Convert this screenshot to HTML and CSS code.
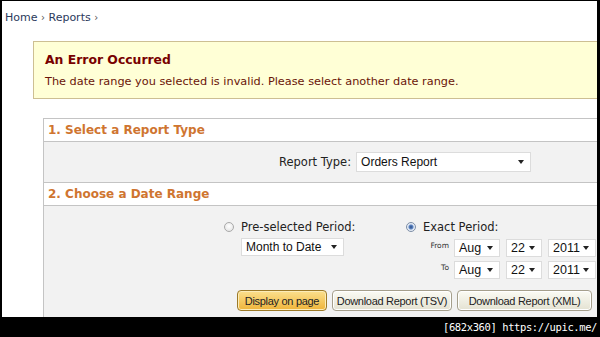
FILE: index.html
```html
<!DOCTYPE html>
<html lang="en">
<head>
  <meta charset="UTF-8">
  <meta name="viewport" content="width=device-width, initial-scale=1.0">
  <title>Reports</title>
  <link rel="stylesheet" href="styles.css">
</head>
<body>
  <div class="screen">
    <div class="crumbs">Home <span class="sep">&rsaquo;</span> Reports <span class="sep">&rsaquo;</span></div>

    <div class="error">
      <h2>An Error Occurred</h2>
      <p>The date range you selected is invalid. Please select another date range.</p>
    </div>

    <div class="panel">
      <div class="section-head">1. Select a Report Type</div>
      <div class="section-body type-row">
        <span class="label">Report Type:</span>
        <div class="select report-select"><span>Orders Report</span><i class="arrow"></i></div>
      </div>

      <div class="section-head">2. Choose a Date Range</div>
      <div class="section-body range-body">
        <div class="range-cols">
          <div class="col preset">
            <div class="radio-line"><span class="radio"></span><span class="radio-label">Pre-selected Period:</span></div>
            <div class="select month-select"><span>Month to Date</span><i class="arrow"></i></div>
          </div>
          <div class="col exact">
            <div class="radio-line"><span class="radio checked"></span><span class="radio-label">Exact Period:</span></div>
            <div class="date-row first">
              <span class="small">From</span>
              <div class="select m"><span>Aug</span><i class="arrow"></i></div>
              <div class="select d"><span>22</span><i class="arrow"></i></div>
              <div class="select y"><span>2011</span><i class="arrow"></i></div>
            </div>
            <div class="date-row">
              <span class="small">To</span>
              <div class="select m"><span>Aug</span><i class="arrow"></i></div>
              <div class="select d"><span>22</span><i class="arrow"></i></div>
              <div class="select y"><span>2011</span><i class="arrow"></i></div>
            </div>
          </div>
        </div>
        <div class="buttons">
          <button class="btn primary">Display on page</button>
          <button class="btn tsv">Download Report (TSV)</button>
          <button class="btn xml">Download Report (XML)</button>
        </div>
      </div>
    </div>
  </div>
  <div class="stamp">[682x360] https://upic.me/</div>
</body>
</html>
```

FILE: styles.css
```css
html, body {
  margin: 0;
  background: #000;
}

body {
  width: 600px;
  height: 337px;
  overflow: hidden;
  font-family: "DejaVu Sans", Verdana, sans-serif;
}

.screen {
  width: 595px;
  height: 316px;
  margin: 1px 0 0 2px;
  background: #fff;
  overflow: hidden;
}

.crumbs {
  padding: 10px 0 0 3px;
  font-size: 11px;
  color: #2b3a5c;
}

.crumbs .sep {
  font-size: 10px;
  color: #555;
}

.error {
  margin: 17px -10px 0 31px;
  height: 56px;
  border: 1px solid #cdbf93;
  background: #ffffd6;
  padding: 0 0 0 11px;
}

.error h2 {
  margin: 10px 0 0;
  font-size: 12.4px;
  font-weight: bold;
  color: #780000;
}

.error p {
  margin: 8px 0 0;
  font-size: 11.3px;
  color: #6a1508;
}

.panel {
  margin: 19px -10px 0 41px;
  border-left: 1px solid #c4c4c4;
  border-top: 1px solid #c4c4c4;
}

.section-head {
  height: 22px;
  line-height: 23px;
  padding-left: 4px;
  background: #fff;
  border-bottom: 1px solid #c4c4c4;
  font-size: 12px;
  font-weight: bold;
  color: #cf7530;
}

.section-body {
  background: #f2f2f2;
  border-bottom: 1px solid #c4c4c4;
}

.type-row {
  height: 40px;
  display: flex;
  align-items: center;
  padding-left: 235px;
  gap: 5px;
}

.label {
  font-size: 11.5px;
  color: #222;
}

.select {
  display: flex;
  align-items: center;
  justify-content: space-between;
  height: 18px;
  padding: 0 6px 0 4px;
  background: #fff;
  border: 1px solid #dcdcdc;
  font-family: "Liberation Sans", Arial, sans-serif;
  font-size: 12px;
  color: #111;
  box-sizing: border-box;
}

.arrow {
  width: 0;
  height: 0;
  border-left: 3px solid transparent;
  border-right: 3px solid transparent;
  border-top: 4px solid #222;
}

.report-select {
  width: 175px;
  height: 20px;
}

.range-body {
  height: 120px;
}

.range-cols {
  display: flex;
  padding: 13px 0 0 180px;
}

.preset {
  width: 182px;
}

.radio-line {
  display: flex;
  align-items: center;
  gap: 5px;
  height: 16px;
}

.radio {
  width: 10px;
  height: 10px;
  border-radius: 50%;
  border: 1px solid #a9a9a9;
  background: radial-gradient(circle at 50% 40%, #fff 0, #e6e6e6 80%);
  box-sizing: border-box;
  margin-right: 2px;
}

.radio.checked {
  border-color: #7d8ea6;
  background: radial-gradient(circle, #2c4f86 0, #5f86c4 2px, #dde6f2 3px, #f4f6fa 5px);
}

.radio-label {
  font-size: 11.5px;
  color: #222;
}

.month-select {
  width: 103px;
  margin: 3px 0 0 17px;
}

.date-row {
  display: flex;
  align-items: center;
  gap: 6px;
  margin-top: 4px;
  padding-left: 20px;
}

.date-row.first {
  margin-top: 4px;
}

.small {
  width: 23px;
  text-align: right;
  font-size: 7.5px;
  color: #333;
  margin-right: -1px;
  align-self: flex-start;
  padding-top: 2px;
}

.date-row .select {
  height: 18px;
  font-size: 12.5px;
}

.select.m { width: 46px; }
.select.d { width: 36px; }
.select.y { width: 48px; }

.buttons {
  display: flex;
  gap: 5px;
  padding: 11px 0 0 193px;
}

.btn {
  height: 21px;
  padding: 0;
  border: 1px solid #a59f8c;
  border-radius: 4px;
  background: linear-gradient(#fbfbf4, #e4e2d2);
  font-family: "Liberation Sans", Arial, sans-serif;
  font-size: 11px;
  letter-spacing: -0.3px;
  white-space: nowrap;
  color: #222;
  box-shadow: inset 0 0 0 1px #fff;
}

.btn.primary {
  width: 90px;
  border-color: #9c7a28;
  background: linear-gradient(#fbe08e, #efb43a);
  box-shadow: inset 0 0 0 1px #fcecb8;
}

.btn.tsv { width: 120px; }
.btn.xml { width: 135px; }

.stamp {
  height: 20px;
  line-height: 20px;
  text-align: right;
  padding-right: 3px;
  color: #fff;
  font-family: "DejaVu Sans Mono", monospace;
  font-size: 10.5px;
  letter-spacing: -0.4px;
}
```
